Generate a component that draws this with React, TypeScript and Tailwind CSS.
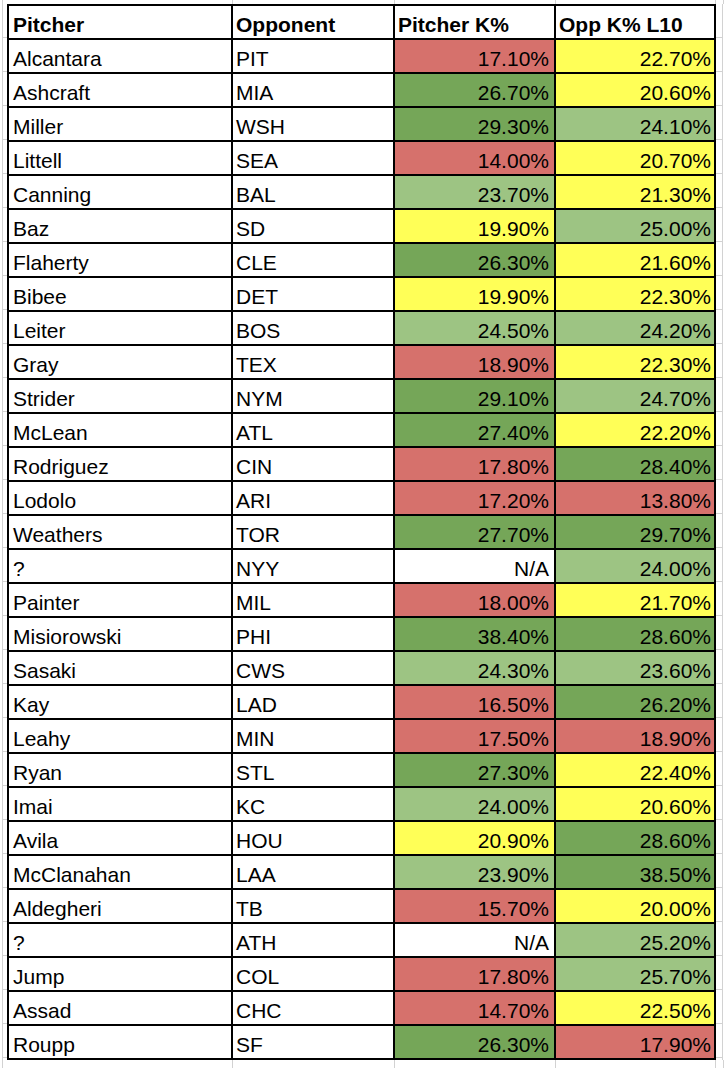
import React from "react";

type Tone = "r" | "dg" | "lg" | "y" | "w";

const TONE: Record<Tone, string> = {
  r: "bg-[#d6716c]",
  dg: "bg-[#75a658]",
  lg: "bg-[#9dc483]",
  y: "bg-[#ffff57]",
  w: "bg-white",
};

const ROWS: [string, string, string, Tone, string, Tone][] = [
  ["Alcantara", "PIT", "17.10%", "r", "22.70%", "y"],
  ["Ashcraft", "MIA", "26.70%", "dg", "20.60%", "y"],
  ["Miller", "WSH", "29.30%", "dg", "24.10%", "lg"],
  ["Littell", "SEA", "14.00%", "r", "20.70%", "y"],
  ["Canning", "BAL", "23.70%", "lg", "21.30%", "y"],
  ["Baz", "SD", "19.90%", "y", "25.00%", "lg"],
  ["Flaherty", "CLE", "26.30%", "dg", "21.60%", "y"],
  ["Bibee", "DET", "19.90%", "y", "22.30%", "y"],
  ["Leiter", "BOS", "24.50%", "lg", "24.20%", "lg"],
  ["Gray", "TEX", "18.90%", "r", "22.30%", "y"],
  ["Strider", "NYM", "29.10%", "dg", "24.70%", "lg"],
  ["McLean", "ATL", "27.40%", "dg", "22.20%", "y"],
  ["Rodriguez", "CIN", "17.80%", "r", "28.40%", "dg"],
  ["Lodolo", "ARI", "17.20%", "r", "13.80%", "r"],
  ["Weathers", "TOR", "27.70%", "dg", "29.70%", "dg"],
  ["?", "NYY", "N/A", "w", "24.00%", "lg"],
  ["Painter", "MIL", "18.00%", "r", "21.70%", "y"],
  ["Misiorowski", "PHI", "38.40%", "dg", "28.60%", "dg"],
  ["Sasaki", "CWS", "24.30%", "lg", "23.60%", "lg"],
  ["Kay", "LAD", "16.50%", "r", "26.20%", "dg"],
  ["Leahy", "MIN", "17.50%", "r", "18.90%", "r"],
  ["Ryan", "STL", "27.30%", "dg", "22.40%", "y"],
  ["Imai", "KC", "24.00%", "lg", "20.60%", "y"],
  ["Avila", "HOU", "20.90%", "y", "28.60%", "dg"],
  ["McClanahan", "LAA", "23.90%", "lg", "38.50%", "dg"],
  ["Aldegheri", "TB", "15.70%", "r", "20.00%", "y"],
  ["?", "ATH", "N/A", "w", "25.20%", "lg"],
  ["Jump", "COL", "17.80%", "r", "25.70%", "lg"],
  ["Assad", "CHC", "14.70%", "r", "22.50%", "y"],
  ["Roupp", "SF", "26.30%", "dg", "17.90%", "r"],
];

const cell = "h-[32px] pt-[5px] leading-[28px] text-[21px] whitespace-nowrap overflow-hidden";

// thin grey sheet gridlines above / below the bordered table
function GridStrip({ height }: { height: string }) {
  return (
    <div className={`flex ${height}`}>
      <div className="w-[2px] shrink-0" />
      <div className="w-[230px] shrink-0 border-l border-[#d2d2d2]" />
      <div className="w-[162px] shrink-0 border-l border-[#d2d2d2]" />
      <div className="w-[161px] shrink-0 border-l border-[#d2d2d2]" />
      <div className="w-[160px] shrink-0 border-l border-[#d2d2d2]" />
      <div className="w-[8px] shrink-0 border-l border-[#d2d2d2]" />
      <div className="flex-1 border-l border-[#d2d2d2]" />
    </div>
  );
}

function SideStrip({ side }: { side: "left" | "right" }) {
  return (
    <div
      className={
        side === "left"
          ? "ml-[2px] w-[5px] shrink-0 border-l border-[#d2d2d2] flex flex-col"
          : "w-[7px] shrink-0 border-r border-[#d2d2d2] flex flex-col"
      }
    >
      {Array.from({ length: 31 }, (_, i) => (
        <div key={i} className="h-[34px] shrink-0 border-b border-[#d2d2d2]" />
      ))}
      <div className="flex-1" />
    </div>
  );
}

export default function App() {
  return (
    <div className="w-[724px] h-[1068px] overflow-hidden bg-white text-black font-['Liberation_Sans',Arial,sans-serif]">
      <GridStrip height="h-[4px]" />
      <div className="flex">
        <SideStrip side="left" />
        <div className="grid grid-cols-[222px_160px_159px_158px] gap-[2px] bg-black p-[2px]">
          {/* header */}
          <div className={`${cell} h-[31px] pt-[4px] bg-white pl-[4px] font-bold`}>Pitcher</div>
          <div className={`${cell} h-[31px] pt-[4px] bg-white pl-[3px] font-bold`}>Opponent</div>
          <div className={`${cell} h-[31px] pt-[4px] bg-white pl-[3px] font-bold`}>Pitcher K%</div>
          <div className={`${cell} h-[31px] pt-[4px] bg-white pl-[3px] font-bold`}>Opp K% L10</div>

          {ROWS.map(([name, opp, k, kTone, oppK, oppTone], i) => (
            <React.Fragment key={i}>
              <div className={`${cell} bg-white pl-[4px]`}>{name}</div>
              <div className={`${cell} bg-white pl-[3px]`}>{opp}</div>
              <div className={`${cell} ${TONE[kTone]} pr-[5px] text-right`}>{k}</div>
              <div className={`${cell} ${TONE[oppTone]} pr-[3px] text-right`}>{oppK}</div>
            </React.Fragment>
          ))}
        </div>
        <SideStrip side="right" />
      </div>
      <GridStrip height="h-[10px]" />
    </div>
  );
}
